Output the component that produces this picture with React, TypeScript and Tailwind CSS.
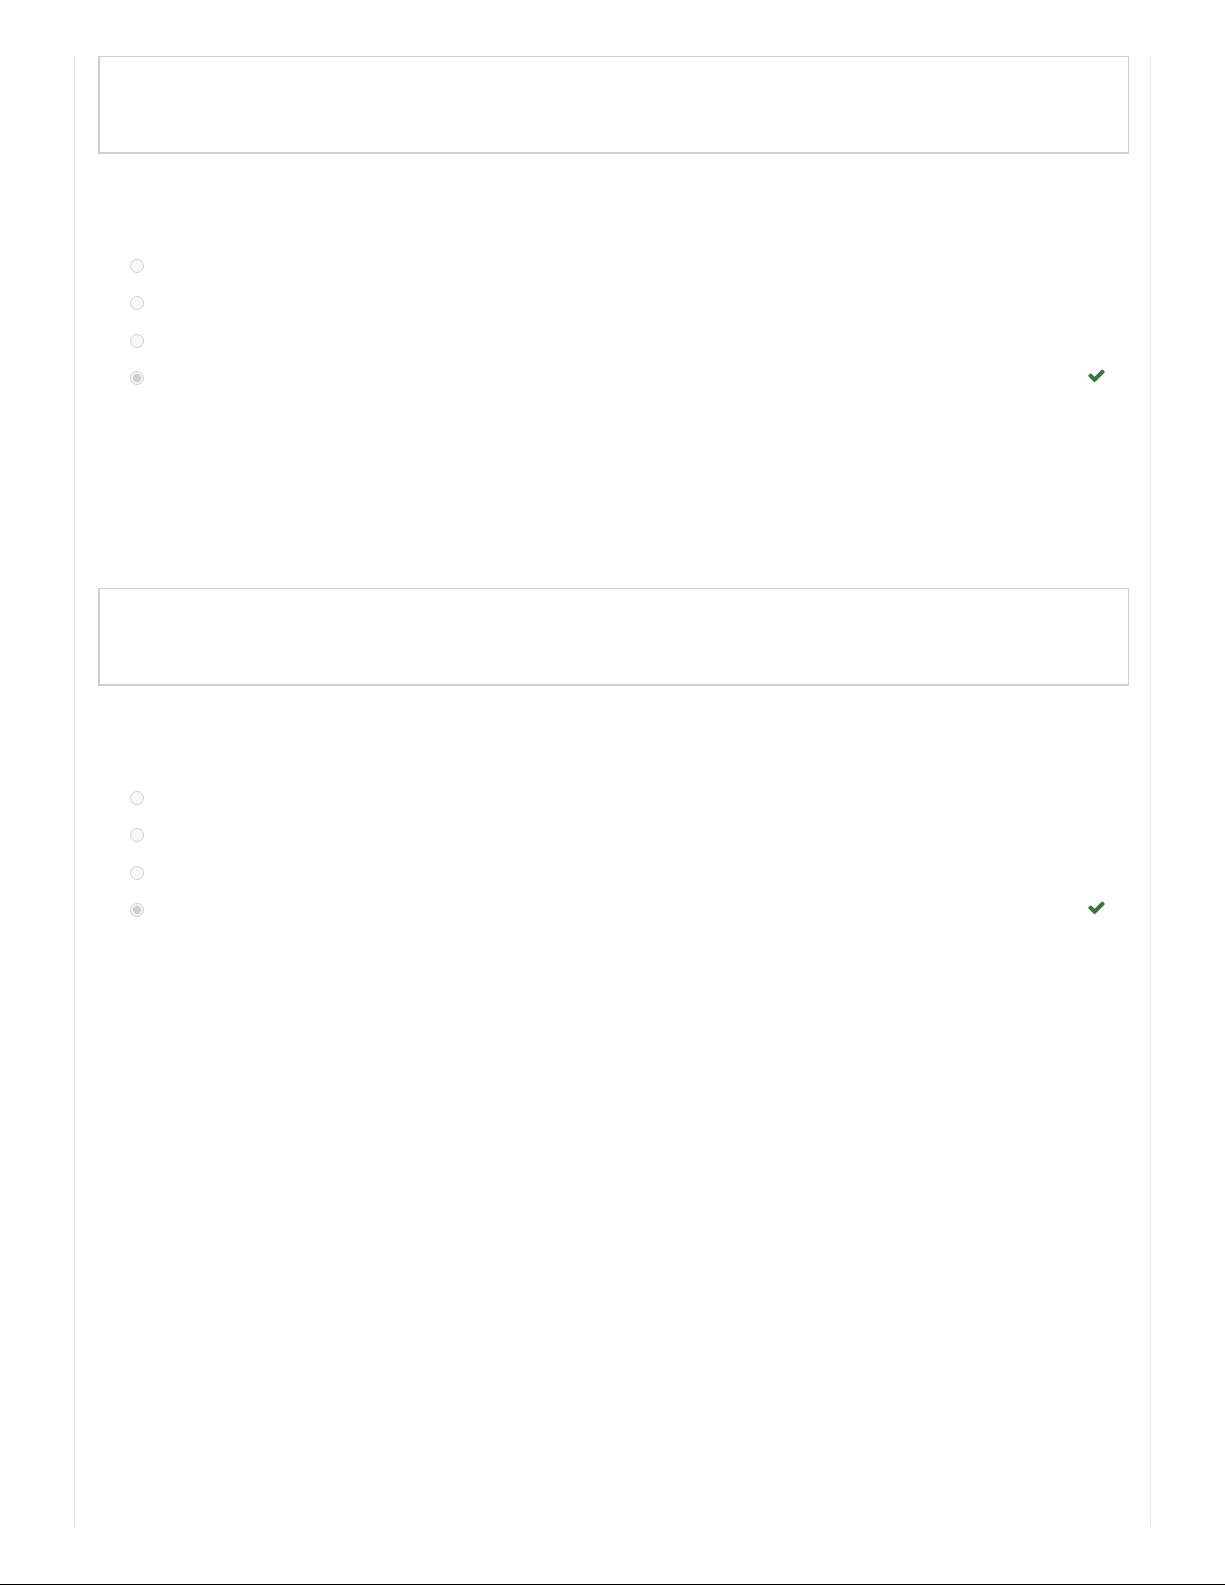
import React from "react";

function Check() {
  return (
    <svg viewBox="0 0 1792 1792" className="w-[19px] h-[19px] -mt-[6px] text-[#3c763d]" fill="currentColor">
      <path d="M1671 566q0 40-28 68l-724 724-136 136q-28 28-68 28t-68-28l-136-136-362-362q-28-28-28-68t28-68l136-136q28-28 68-28t68 28l294 295 656-657q28-28 68-28t68 28l136 136q28 28 28 68z" />
    </svg>
  );
}

function Question() {
  const opts = [false, false, false, true];
  return (
    <div>
      <div className="h-[98px] border border-[#cbd0d6] border-l-2 border-b-2 bg-white" />
      <div className="mt-[93px] pl-[32px] pr-[23px]">
        {opts.map((c, i) => (
          <div key={i} className="h-[37.5px] flex items-center justify-between">
            <input
              type="radio"
              disabled
              checked={c}
              readOnly
              className="m-0 w-[14px] h-[14px]"
            />
            {c && <Check />}
          </div>
        ))}
      </div>
    </div>
  );
}

export default function App() {
  return (
    <div className="w-full h-[1585px] bg-white flex flex-col" style={{ fontFamily: '"Liberation Sans", sans-serif' }}>
      <div className="mt-[56px] ml-[74px] w-[1077px] h-[1471px] border-x border-[#e8e8e8] pl-[23px] pr-[21px]">
        <Question />
        <div className="mt-[191px]">
          <Question />
        </div>
      </div>
      <div className="mt-auto h-px bg-black w-full" />
    </div>
  );
}
